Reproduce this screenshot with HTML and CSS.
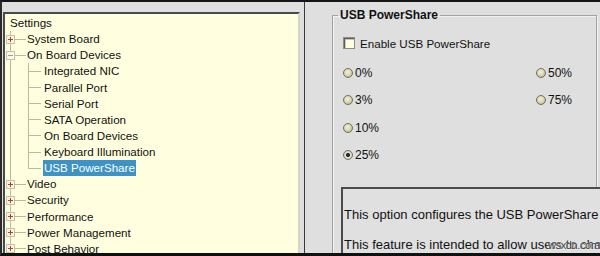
FILE: index.html
```html
<!DOCTYPE html>
<html>
<head>
<meta charset="utf-8">
<link rel="stylesheet" href="styles.css">
</head>
<body>
<div class="frame">
  <div class="left">
    <div class="tree">
      <div class="row root"><span class="label">Settings</span></div>
      <div class="row top"><span class="exp plus"></span><span class="label">System Board</span></div>
      <div class="row top"><span class="exp minus"></span><span class="label">On Board Devices</span></div>
      <div class="row child"><span class="label">Integrated NIC</span></div>
      <div class="row child"><span class="label">Parallel Port</span></div>
      <div class="row child"><span class="label">Serial Port</span></div>
      <div class="row child"><span class="label">SATA Operation</span></div>
      <div class="row child"><span class="label">On Board Devices</span></div>
      <div class="row child"><span class="label">Keyboard Illumination</span></div>
      <div class="row child last"><span class="label selected">USB PowerShare</span></div>
      <div class="row top"><span class="exp plus"></span><span class="label">Video</span></div>
      <div class="row top"><span class="exp plus"></span><span class="label">Security</span></div>
      <div class="row top"><span class="exp plus"></span><span class="label">Performance</span></div>
      <div class="row top"><span class="exp plus"></span><span class="label">Power Management</span></div>
      <div class="row top"><span class="exp plus"></span><span class="label">Post Behavior</span></div>
    </div>
  </div>
  <div class="splitter"></div>
  <div class="right">
    <fieldset class="group">
      <legend class="legend">USB PowerShare</legend>
      <div class="check-row"><span class="checkbox"></span><span class="check-text">Enable USB PowerShare</span></div>
      <div class="radios">
        <div class="opt"><span class="radio"></span>0%</div>
        <div class="opt"><span class="radio"></span>50%</div>
        <div class="opt"><span class="radio"></span>3%</div>
        <div class="opt"><span class="radio"></span>75%</div>
        <div class="opt"><span class="radio"></span>10%</div>
        <div class="opt"></div>
        <div class="opt"><span class="radio checked"></span>25%</div>
      </div>
      <div class="desc">
        <p class="desc-p">This option configures the USB PowerShare feature behavior.</p>
        <p class="desc-p second">This feature is intended to allow users to charge external devices using the stored system battery power.</p>
      </div>
    </fieldset>
  </div>
  <span class="watermark">wsxdn.com</span>
</div>
</body>
</html>
```

FILE: styles.css
```css
html, body {
  margin: 0;
  padding: 0;
  background: #dfdfdf;
}

.frame {
  position: relative;
  width: 600px;
  height: 256px;
  box-sizing: border-box;
  border-top: 2px solid #151515;
  border-left: 2px solid #2a2a2a;
  border-bottom: 3px solid #111;
  display: flex;
  overflow: hidden;
  background: #dfdfdf;
  font-family: "Liberation Sans", Arial, sans-serif;
  font-size: 11.6px;
  color: #111;
}

.left {
  width: 302px;
  flex: none;
  box-sizing: border-box;
  padding: 10px 4px 0 1px;
  display: flex;
  flex-direction: column;
}

.tree {
  flex: 1;
  background: #ffffe0;
  border-top: 2px solid #4a4a4a;
  border-left: 2px solid #4a4a4a;
  border-right: 2px solid #d6d6c6;
  padding-top: 1px;
  overflow: hidden;
}

.row {
  height: 16.14px;
  display: flex;
  align-items: center;
  white-space: nowrap;
  line-height: 14px;
  background-repeat: no-repeat;
}

.root {
  padding-left: 4px;
}

.top {
  background-image:
    linear-gradient(#b9b9a6, #b9b9a6),
    linear-gradient(#b9b9a6, #b9b9a6);
  background-position: 5px 0, 9px 50%;
  background-size: 1px 100%, 12px 1px;
}

.child {
  padding-left: 38px;
  background-image:
    linear-gradient(#b9b9a6, #b9b9a6),
    linear-gradient(#b9b9a6, #b9b9a6),
    linear-gradient(#b9b9a6, #b9b9a6);
  background-position: 5px 0, 23px 0, 23px 50%;
  background-size: 1px 100%, 1px 100%, 13px 1px;
}

.child.last {
  background-size: 1px 100%, 1px 50%, 13px 1px;
}

.exp {
  width: 9px;
  height: 9px;
  box-sizing: border-box;
  margin-left: 1px;
  margin-right: 11px;
  border: 1px solid #c9bfa6;
  background-color: #fbf8ec;
  background-repeat: no-repeat;
}

.plus {
  background-image:
    linear-gradient(#c63a2e, #c63a2e),
    linear-gradient(#c63a2e, #c63a2e);
  background-position: center, center;
  background-size: 5px 1px, 1px 5px;
}

.minus {
  background-image: linear-gradient(#a89c86, #a89c86);
  background-position: center;
  background-size: 5px 1px;
}

.label {
  padding: 1px 1px;
}

.selected {
  background: #3d92c6;
  color: #fff;
}

.splitter {
  width: 1px;
  flex: none;
  background: #3a3a3a;
}

.right {
  flex: 1;
  min-width: 0;
  box-sizing: border-box;
  padding: 6px 3px 0 27px;
  overflow: hidden;
}

.group {
  margin: 0;
  padding: 0;
  min-width: 0;
  height: 320px;
  border: 1px solid #a2a2a2;
  box-shadow: inset 1px 1px 0 #f2f2f2, 1px 1px 0 #f2f2f2;
}

.legend {
  margin-left: 5px;
  padding: 0 2px;
  font-weight: bold;
  font-size: 12px;
  line-height: 14px;
  color: #111;
}

.check-row {
  margin: 14px 0 0 10px;
  height: 14px;
  display: flex;
  align-items: center;
}

.checkbox {
  width: 12px;
  height: 12px;
  box-sizing: border-box;
  border: 1px solid #8c8c8c;
  background: #ffffe0;
  box-shadow: inset 1px 1px 0 #5e5e5e, inset 2px 2px 0 #c8c8b0;
  margin-right: 5px;
}

.radios {
  margin: 16px 0 0 10px;
  display: grid;
  grid-template-columns: 193px auto;
  grid-auto-rows: 14px;
  row-gap: 13.3px;
}

.opt {
  display: flex;
  align-items: center;
  height: 14px;
  font-size: 12px;
}

.radio {
  width: 10px;
  height: 10px;
  box-sizing: border-box;
  border-radius: 50%;
  border: 1px solid #6f6f60;
  background: radial-gradient(circle at 45% 40%, #f4f2d6 0, #dcd9b4 45%, #a9a78a 100%);
  margin-right: 2px;
}

.radio.checked {
  background: radial-gradient(circle, #1f2a4a 0, #1f2a4a 1.6px, #e6e4c8 2.4px, #c4c2a2 100%);
}

.desc {
  margin: 25px 0 0 8px;
  width: 420px;
  height: 120px;
  border: 2px solid #4c4c4c;
  padding: 18px 0 0 1px;
  background: #e0e0e0;
}

.desc-p {
  margin: 0;
  line-height: 15px;
  white-space: nowrap;
  font-size: 13px;
}

.desc-p.second {
  margin-top: 15px;
}

.watermark {
  position: absolute;
  left: 546px;
  top: 237px;
  font-size: 11px;
  color: #3a3a3a;
  text-shadow: 0 0 2px #fff, 0 0 2px #fff;
  letter-spacing: -0.4px;
}
```
